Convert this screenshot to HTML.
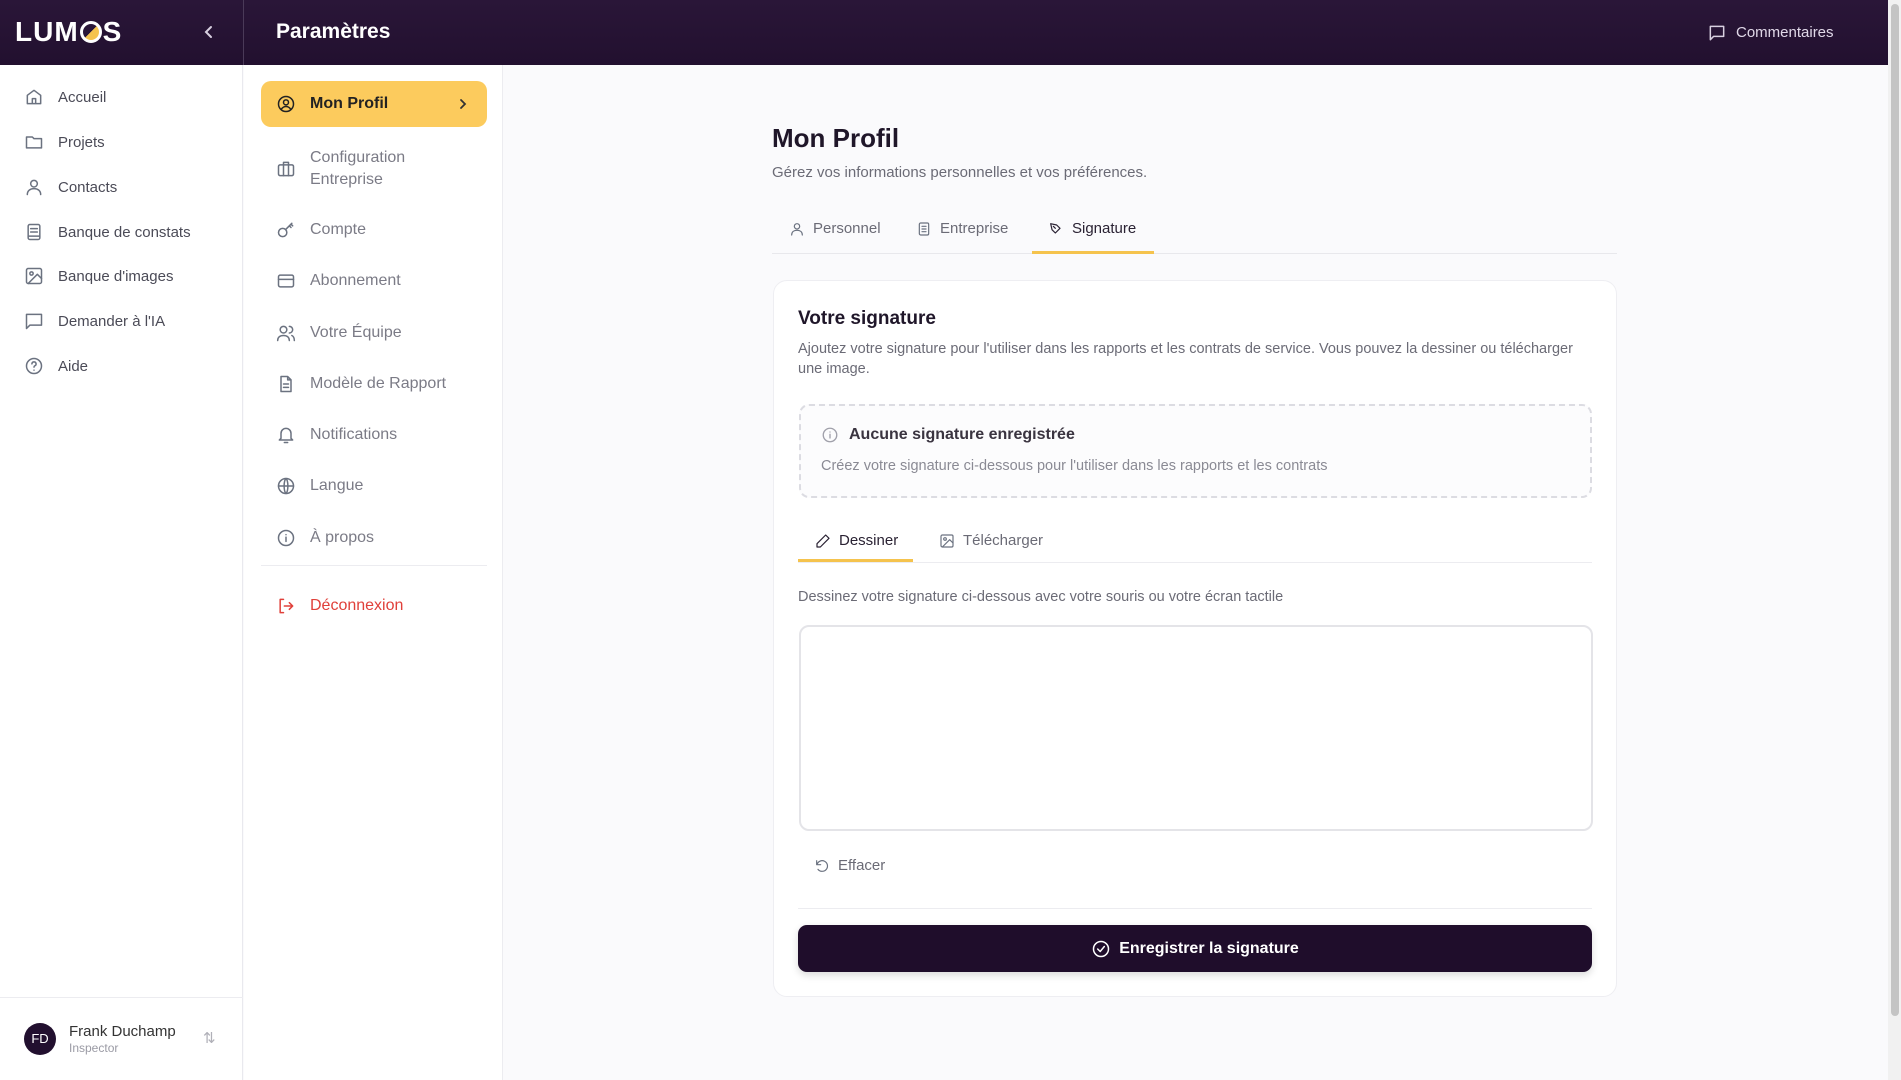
<!DOCTYPE html>
<html><head><meta charset="utf-8"><style>
*{box-sizing:border-box;margin:0;padding:0}
html,body{width:1901px;height:1080px;overflow:hidden}
body{font-family:"Liberation Sans",sans-serif;background:#fafafc;position:relative;color:#1f1629}
.a{position:absolute}
svg.i{width:20px;height:20px;fill:none;stroke:#6b7280;stroke-width:1.8;stroke-linecap:round;stroke-linejoin:round}
.hdr{left:0;top:0;width:1888px;height:65px;background:linear-gradient(#2a1638,#22102f)}
.nav{left:0;top:65px;width:243px;height:1015px;background:#fff;border-right:1px solid #e9e9ee}
.nv{position:absolute;left:24px;display:flex;align-items:center;gap:14px;font-size:15px;color:#4b4b57}
.sub{left:244px;top:65px;width:259px;height:1015px;background:#fff;border-right:1px solid #ececf0}
.sv{position:absolute;left:32px;display:flex;align-items:center;gap:14px;font-size:16px;color:#7b7b86}
.t{font-size:15px;color:#6b6b76}
</style></head><body>
<div class="a hdr"></div>
<div class="a" style="left:243px;top:0;width:1px;height:65px;background:#4a3a58"></div>
<div class="a" style="left:15px;top:16px;font-size:28px;font-weight:bold;color:#fff;letter-spacing:1px">LUM<span style="display:inline-block;width:22px;height:22px;border-radius:50%;border:3px solid #fff;background:linear-gradient(135deg,#2a1638 50%,#f5c34d 50%);vertical-align:-2px;margin:0 1px"></span>S</div>
<svg class="a" style="left:202px;top:24px;width:14px;height:16px" viewBox="0 0 14 16"><path d="M9 3L4 8l5 5" stroke="#d8d0e0" stroke-width="2" fill="none" stroke-linecap="round"/></svg>
<div class="a" style="left:276px;top:20px;font-size:21px;font-weight:bold;color:#fff">Paramètres</div>
<svg class="a i" style="left:1707px;top:23px;stroke:#d8d0e0" viewBox="0 0 24 24"><path d="M4 4h16v12H8l-4 4z"/></svg>
<div class="a" style="left:1736px;top:24px;font-size:15px;color:#e0d8e8">Commentaires</div>
<div class="a" style="left:1888px;top:0;width:13px;height:1080px;background:#f1f1f1"></div>
<div class="a" style="left:1891px;top:4px;width:8px;height:1012px;background:#c4c4c4;border-radius:4px"></div>

<div class="a nav">
<div class="nv" style="top:22px"><svg class="i" viewBox="0 0 24 24"><path d="M4 10l8-6 8 6v10H4z M10 20v-6h4v6"/></svg>Accueil</div>
<div class="nv" style="top:67px"><svg class="i" viewBox="0 0 24 24"><path d="M3 6h7l2 2h9v11H3z"/></svg>Projets</div>
<div class="nv" style="top:112px"><svg class="i" viewBox="0 0 24 24"><circle cx="12" cy="8" r="4"/><path d="M4 21c0-5 4-7 8-7s8 2 8 7"/></svg>Contacts</div>
<div class="nv" style="top:157px"><svg class="i" viewBox="0 0 24 24"><rect x="5" y="3" width="14" height="18" rx="2"/><path d="M8 8h8M8 12h8M5 17h14"/></svg>Banque de constats</div>
<div class="nv" style="top:201px"><svg class="i" viewBox="0 0 24 24"><rect x="3" y="3" width="18" height="18" rx="2"/><circle cx="9" cy="9" r="2"/><path d="M21 15l-5-5L5 21"/></svg>Banque d'images</div>
<div class="nv" style="top:246px"><svg class="i" viewBox="0 0 24 24"><path d="M3 4h18v13H7l-4 4z"/></svg>Demander à l'IA</div>
<div class="nv" style="top:291px"><svg class="i" viewBox="0 0 24 24"><circle cx="12" cy="12" r="9"/><path d="M9.5 9.5a2.5 2.5 0 1 1 3.5 2.3c-.7.3-1 .8-1 1.5M12 17h.01"/></svg>Aide</div>
<div class="a" style="left:0;top:932px;width:243px;height:1px;background:#ececf0"></div>
<div class="a" style="left:24px;top:958px;width:32px;height:32px;border-radius:50%;background:#22102f;color:#fff;font-size:13px;line-height:32px;text-align:center">FD</div>
<div class="a" style="left:69px;top:958px;font-size:15px;color:#333">Frank Duchamp</div>
<div class="a" style="left:69px;top:976px;font-size:12px;color:#9a9aa4">Inspector</div>
<div class="a" style="left:203px;top:964px;font-size:15px;color:#b0b0b8">⇅</div>
</div>

<div class="a sub">
<div class="a" style="left:17px;top:16px;width:226px;height:46px;background:#fccb5d;border-radius:10px"></div>
<div class="sv" style="top:29px;color:#222"><svg class="i" style="stroke:#222" viewBox="0 0 24 24"><circle cx="12" cy="12" r="9"/><circle cx="12" cy="10" r="3"/><path d="M6.5 18c1.5-2 3.5-3 5.5-3s4 1 5.5 3"/></svg><span style="font-weight:bold;font-size:16px">Mon Profil</span></div>
<svg class="a" style="left:212px;top:32px;width:14px;height:14px" viewBox="0 0 14 14"><path d="M5 3l4 4-4 4" stroke="#333" stroke-width="1.8" fill="none" stroke-linecap="round"/></svg>
<div class="sv" style="top:82px;align-items:center"><svg class="i" viewBox="0 0 24 24"><rect x="3" y="7" width="18" height="13" rx="2"/><path d="M9 7V4h6v3M9 7v13M15 7v13"/></svg><span style="line-height:22px">Configuration<br>Entreprise</span></div>
<div class="sv" style="top:155px"><svg class="i" viewBox="0 0 24 24"><circle cx="8" cy="15" r="5"/><path d="M11.5 11.5L19 4M16 7l2 2M18 5l2 2"/></svg>Compte</div>
<div class="sv" style="top:206px"><svg class="i" viewBox="0 0 24 24"><rect x="3" y="5" width="18" height="14" rx="2"/><path d="M3 10h18"/></svg>Abonnement</div>
<div class="sv" style="top:258px"><svg class="i" viewBox="0 0 24 24"><circle cx="9" cy="8" r="4"/><path d="M2 21c0-4 3-6 7-6s7 2 7 6M16 4a4 4 0 0 1 0 8M19 15c2 1 3 3 3 6"/></svg>Votre Équipe</div>
<div class="sv" style="top:309px"><svg class="i" viewBox="0 0 24 24"><path d="M14 3H6v18h12V7z M14 3v4h4 M9 12h6M9 16h6"/></svg>Modèle de Rapport</div>
<div class="sv" style="top:360px"><svg class="i" viewBox="0 0 24 24"><path d="M6 16V10a6 6 0 0 1 12 0v6l2 2H4z M10 21h4"/></svg>Notifications</div>
<div class="sv" style="top:411px"><svg class="i" viewBox="0 0 24 24"><circle cx="12" cy="12" r="9"/><path d="M3 12h18M12 3c3 3 3 15 0 18M12 3c-3 3-3 15 0 18"/></svg>Langue</div>
<div class="sv" style="top:463px"><svg class="i" viewBox="0 0 24 24"><circle cx="12" cy="12" r="9"/><path d="M12 11v5M12 8h.01"/></svg>À propos</div>
<div class="a" style="left:17px;top:500px;width:226px;height:1px;background:#ececf0"></div>
<div class="sv" style="top:531px;color:#e0403a"><svg class="i" style="stroke:#e0403a" viewBox="0 0 24 24"><path d="M9 4H5v16h4M10 12h10M16 8l4 4-4 4"/></svg>Déconnexion</div>
</div>

<div class="a" style="left:772px;top:123px;font-size:26px;font-weight:bold;color:#1f1629">Mon Profil</div>
<div class="a t" style="left:772px;top:164px">Gérez vos informations personnelles et vos préférences.</div>
<div class="a" style="left:772px;top:253px;width:845px;height:1px;background:#e8e8ec"></div>
<div class="a t" style="left:789px;top:220px;display:flex;align-items:center;gap:8px;font-size:15px"><svg class="i" style="width:16px;height:16px" viewBox="0 0 24 24"><circle cx="12" cy="8" r="4"/><path d="M4 21c0-5 4-7 8-7s8 2 8 7"/></svg>Personnel</div>
<div class="a t" style="left:916px;top:220px;display:flex;align-items:center;gap:8px;font-size:15px"><svg class="i" style="width:16px;height:16px" viewBox="0 0 24 24"><rect x="5" y="3" width="14" height="18" rx="2"/><path d="M9 8h6M9 12h6M9 16h6"/></svg>Entreprise</div>
<div class="a" style="left:1048px;top:220px;display:flex;align-items:center;gap:8px;font-size:15px;color:#2a2233"><svg class="i" style="width:16px;height:16px;stroke:#2a2233" viewBox="0 0 24 24"><path d="M4 4l9 2 5 5-7 7-5-5z M8 8l3 3"/></svg>Signature</div>
<div class="a" style="left:1032px;top:251px;width:122px;height:3px;background:#f5c34d"></div>

<div class="a" style="left:773px;top:280px;width:844px;height:717px;background:#fff;border:1px solid #eeeef2;border-radius:14px"></div>
<div class="a" style="left:798px;top:308px;font-size:19px;font-weight:bold;color:#1f1629">Votre signature</div>
<div class="a t" style="left:798px;top:339px;width:800px;font-size:14.5px;line-height:20px">Ajoutez votre signature pour l'utiliser dans les rapports et les contrats de service. Vous pouvez la dessiner ou télécharger une image.</div>
<div class="a" style="left:799px;top:404px;width:793px;height:94px;border:2px dashed #dcdce2;border-radius:10px;background:#fcfcfd"></div>
<svg class="a i" style="left:821px;top:426px;width:18px;height:18px;stroke:#a0a0aa" viewBox="0 0 24 24"><circle cx="12" cy="12" r="9"/><path d="M12 11v5M12 8h.01"/></svg>
<div class="a" style="left:849px;top:426px;font-size:16px;font-weight:bold;color:#3a3440">Aucune signature enregistrée</div>
<div class="a" style="left:821px;top:458px;font-size:14.5px;color:#8a8a94">Créez votre signature ci-dessous pour l'utiliser dans les rapports et les contrats</div>

<div class="a" style="left:798px;top:562px;width:794px;height:1px;background:#ececf0"></div>
<div class="a" style="left:798px;top:559px;width:115px;height:3px;background:#f5c34d"></div>
<div class="a" style="left:815px;top:532px;display:flex;align-items:center;gap:8px;font-size:15px;color:#2a2233"><svg class="i" style="width:16px;height:16px;stroke:#2a2233" viewBox="0 0 24 24"><path d="M16 3l5 5L8 21H3v-5z"/></svg>Dessiner</div>
<div class="a t" style="left:939px;top:532px;display:flex;align-items:center;gap:8px;font-size:15px"><svg class="i" style="width:16px;height:16px" viewBox="0 0 24 24"><rect x="3" y="3" width="18" height="18" rx="2"/><circle cx="9" cy="9" r="2"/><path d="M21 15l-5-5L5 21"/></svg>Télécharger</div>
<div class="a t" style="left:798px;top:589px;font-size:14.5px">Dessinez votre signature ci-dessous avec votre souris ou votre écran tactile</div>
<div class="a" style="left:799px;top:625px;width:794px;height:206px;border:2px solid #e4e4e8;border-radius:10px;background:#fff"></div>
<div class="a t" style="left:814px;top:857px;display:flex;align-items:center;gap:8px;font-size:15px"><svg class="i" style="width:16px;height:16px" viewBox="0 0 24 24"><path d="M4 4v6h6 M4.5 10A8 8 0 1 1 6 17"/></svg>Effacer</div>
<div class="a" style="left:798px;top:908px;width:794px;height:1px;background:#ececf0"></div>
<div class="a" style="left:798px;top:925px;width:794px;height:47px;background:#1f0d2b;border-radius:9px;box-shadow:0 3px 8px rgba(0,0,0,.15);display:flex;align-items:center;justify-content:center;gap:8px;color:#fff;font-size:16px;font-weight:bold"><svg class="i" style="stroke:#fff" viewBox="0 0 24 24"><circle cx="12" cy="12" r="9"/><path d="M8 12l3 3 5-6"/></svg>Enregistrer la signature</div>
</body></html>
